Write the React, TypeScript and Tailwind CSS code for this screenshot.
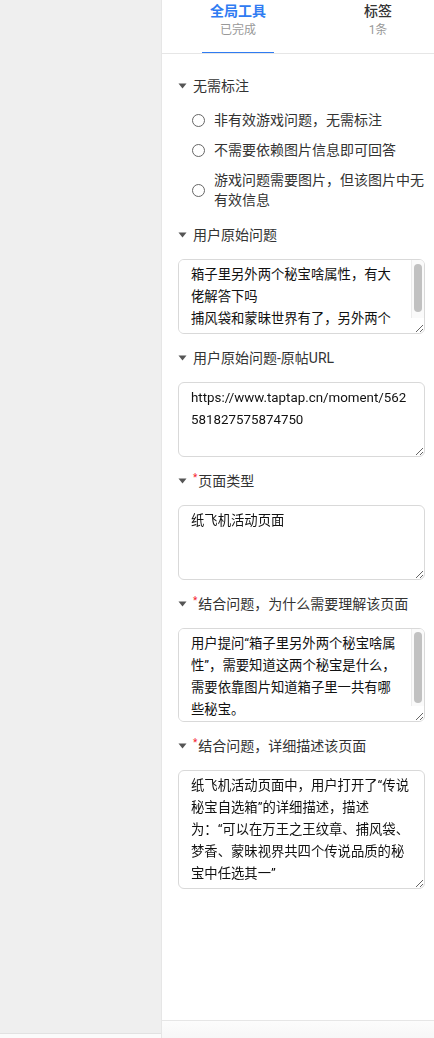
import { useState } from 'react'

const font = 'font-[Roboto,"Noto_Sans_CJK_SC",sans-serif]'

const areaClass =
  'block w-full resize-y rounded-[6px] border border-[#d9d9d9] bg-white pt-1 pb-[3px] pl-3 text-[13.33px] leading-[22px] text-[#111] outline-none [scrollbar-width:none]'

const radios = [
  '非有效游戏问题，无需标注',
  '不需要依赖图片信息即可回答',
  '游戏问题需要图片，但该图片中无有效信息',
]

type Field = {
  label: string
  required: boolean
  height: string
  value: string
  // fake scrollbar thumb: top offset / height
  bar?: { top: number; size: number }
}

const fields: Field[] = [
  {
    label: '用户原始问题',
    required: false,
    height: 'h-[75px]',
    value: '箱子里另外两个秘宝啥属性，有大佬解答下吗\n捕风袋和蒙昧世界有了，另外两个是什么呀？',
    bar: { top: 4, size: 48 },
  },
  {
    label: '用户原始问题-原帖URL',
    required: false,
    height: 'h-[75px]',
    value: 'https://www.taptap.cn/moment/562581827575874750',
  },
  {
    label: '页面类型',
    required: true,
    height: 'h-[75px]',
    value: '纸飞机活动页面',
  },
  {
    label: '结合问题，为什么需要理解该页面',
    required: true,
    height: 'h-[94px]',
    value: '用户提问“箱子里另外两个秘宝啥属性”，需要知道这两个秘宝是什么，需要依靠图片知道箱子里一共有哪些秘宝。',
    bar: { top: 3, size: 71 },
  },
  {
    label: '结合问题，详细描述该页面',
    required: true,
    height: 'h-[119px]',
    value: '纸飞机活动页面中，用户打开了“传说秘宝自选箱”的详细描述，描述为：“可以在万王之王纹章、捕风袋、梦香、蒙昧视界共四个传说品质的秘宝中任选其一”',
  },
]

function Caret() {
  return (
    <svg width="9" height="6" viewBox="0 0 9 6" className="shrink-0">
      <path d="M0.5 0.5 L8.5 0.5 L4.5 5.5 Z" fill="#555" />
    </svg>
  )
}

function SectionHeader({ label, required }: { label: string; required?: boolean }) {
  return (
    <div className="flex h-[22px] items-center text-[14px] text-[#333]">
      <Caret />
      <span className="ml-[6px] flex items-center">
        {required && <span className="mr-[1px] -mt-[7px] text-[10px] leading-none text-[#f5222d]">*</span>}
        {label}
      </span>
    </div>
  )
}

function Area({ f }: { f: Field }) {
  return (
    <div className="relative">
      <textarea
        readOnly
        defaultValue={f.value}
        className={`${areaClass} ${f.height} ${f.bar ? 'pr-[27px]' : 'pr-[14px]'}`}
      />
      {f.bar && (
        <div className="pointer-events-none absolute top-[1px] right-[1px] bottom-[16px] w-[13px] rounded-tr-[5px] border-l border-[#ececec] bg-[#fafafa]">
          <div
            className="absolute left-[2px] w-[8px] rounded-full bg-[#c1c1c1]"
            style={{ top: f.bar.top, height: f.bar.size }}
          />
        </div>
      )}
    </div>
  )
}

export default function App() {
  const [selected, setSelected] = useState<number | null>(null)

  return (
    <div className={`flex h-[1038px] w-[434px] overflow-hidden bg-white ${font}`}>
      {/* left column */}
      <div className="flex w-[162px] shrink-0 flex-col border-r border-[#e6e6e6] bg-[#efefef]">
        <div className="flex-1" />
        <div className="h-[5px] border-t border-[#e2e2e2] bg-[#fbfbfb]" />
      </div>

      {/* right panel */}
      <div className="flex min-w-0 flex-1 flex-col">
        <div className="flex h-[54px] shrink-0 overflow-hidden border-b border-[#e6e6e6] pl-[6px]">
          <div className="relative flex w-[140px] shrink-0 flex-col items-center pt-[1px]">
            <span className="text-[14px] leading-[20px] font-semibold text-[#2f7bf2]">全局工具</span>
            <span className="text-[12px] leading-[18px] text-[#999]">已完成</span>
            <div className="absolute bottom-[-1px] h-[2px] w-[72px] bg-[#2f7bf2]" />
          </div>
          <div className="flex w-[140px] shrink-0 flex-col items-center pt-[1px]">
            <span className="text-[14px] leading-[20px] font-medium text-[#333]">标签</span>
            <span className="text-[12px] leading-[18px] text-[#999]">1条</span>
          </div>
        </div>

        <div className="flex-1 pt-[21px] pl-[16px] pr-[9px]">
          <SectionHeader label="无需标注" />
          <div className="mt-[13px] flex flex-col gap-[10px] pl-[14px]">
            {radios.map((r, i) => (
              <label key={r} className="flex cursor-pointer items-center text-[14px] leading-[20px] text-[#333]">
                <span
                  onClick={() => setSelected(i)}
                  className={`h-[13px] w-[13px] shrink-0 rounded-full border ${selected === i ? 'border-[4px] border-[#2f7bf2]' : 'border-[#666]'}`}
                />
                <span className="ml-[9px] w-[211px]">{r}</span>
              </label>
            ))}
          </div>

          <div className="mt-[14px] flex flex-col gap-[13px]">
            {fields.map(f => (
              <div key={f.label} className="flex flex-col gap-[13px]">
                <SectionHeader label={f.label} required={f.required} />
                <Area f={f} />
              </div>
            ))}
          </div>
        </div>

        <div className="h-[18px] shrink-0 border-t border-[#e6e6e6] bg-gradient-to-b from-[#fcfcfc] to-[#f7f7f7]" />
      </div>
    </div>
  )
}
